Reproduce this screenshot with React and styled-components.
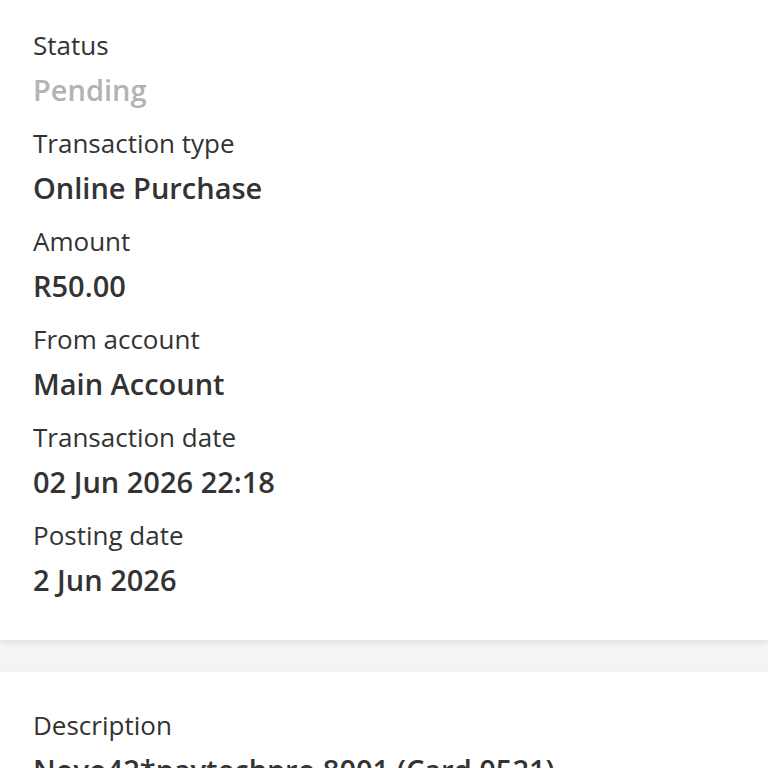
import React from "react";
import styled, { createGlobalStyle } from "styled-components";

const Global = createGlobalStyle`
  html, body { margin: 0; padding: 0; background: #f4f4f4; }
  body { font-family: "Open Sans", "Noto Sans", sans-serif; color: #333; }
`;

const Page = styled.div`
  display: flex;
  flex-direction: column;
  gap: 32px;
  min-height: 768px;
`;

const Card = styled.section`
  background: #fff;
  padding: ${(p) => p.$pad || "29px 33px 40px"};
  display: flex;
  flex-direction: column;
  gap: 17px;
  box-shadow: 0 3px 6px rgba(0, 0, 0, 0.08);
`;

const Field = styled.div`
  display: flex;
  flex-direction: column;
  gap: 9px;
`;

const Label = styled.div`
  font-size: 26px;
  line-height: 32px;
  font-weight: 400;
  color: #333;
`;

const Value = styled.div`
  font-size: 29px;
  line-height: 40px;
  font-weight: 600;
  color: ${(p) => (p.$muted ? "#b3b3b3" : "#333")};
  white-space: nowrap;
`;

const fields = [
  ["Status", "Pending", true],
  ["Transaction type", "Online Purchase"],
  ["Amount", "R50.00"],
  ["From account", "Main Account"],
  ["Transaction date", "02 Jun 2026 22:18"],
  ["Posting date", "2 Jun 2026"],
];

export default function App() {
  return (
    <>
      <Global />
      <Page>
        <Card>
          {fields.map(([l, v, m]) => (
            <Field key={l}>
              <Label>{l}</Label>
              <Value $muted={m}>{v}</Value>
            </Field>
          ))}
        </Card>
        <Card $pad="37px 33px 40px">
          <Field>
            <Label>Description</Label>
            <Value>Novo42*paytechpro 8001 (Card 0521)</Value>
          </Field>
        </Card>
      </Page>
    </>
  );
}
